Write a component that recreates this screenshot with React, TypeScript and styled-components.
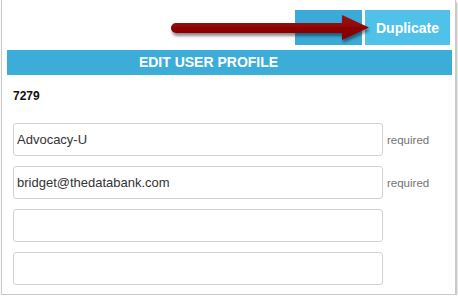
import styled, { createGlobalStyle } from 'styled-components';

const GlobalStyle = createGlobalStyle`
  html, body {
    margin: 0;
    padding: 0;
    background: #ffffff;
    font-family: 'Liberation Sans', Arial, sans-serif;
  }
`;

const Tarjeta = styled.div`
  position: relative;
  box-sizing: border-box;
  width: 455px;
  margin-left: 1px;
  padding: 10px 3px 9px 5px;
  background: #fff;
  border: 1px solid #c9c9c9;
  border-top: 0;
  box-shadow: 1px 2px 2px rgba(0, 0, 0, 0.3);
`;

const BarraHerramientas = styled.div`
  display: flex;
  justify-content: flex-end;
  gap: 3px;
  padding-right: 2px;
`;

const Boton = styled.button<{ $activo?: boolean }>`
  height: 35px;
  padding: 0 ${(p) => (p.$activo ? '11px' : '17px')};
  border: 0;
  border-radius: 0;
  background: ${(p) => (p.$activo ? '#50c1e9' : '#3aabd8')};
  color: ${(p) => (p.$activo ? '#fff' : 'rgba(255,255,255,0.6)')};
  font-family: 'Liberation Sans', Arial, sans-serif;
  font-size: 14px;
  font-weight: bold;
  cursor: pointer;
`;

const Cabecera = styled.div`
  margin-top: 5px;
  height: 25px;
  padding-right: 42px;
  background: #3cadd9;
  color: #fff;
  font-size: 14px;
  font-weight: bold;
  line-height: 25px;
  text-align: center;
`;

const Identificador = styled.div`
  margin: 14px 0 0 6px;
  font-size: 12px;
  font-weight: bold;
  line-height: 14px;
  color: #111;
`;

const Formulario = styled.div`
  display: flex;
  flex-direction: column;
  gap: 10px;
  margin: 20px 0 0 6px;
`;

const Fila = styled.div`
  display: flex;
  align-items: center;
  gap: 4px;
`;

const Campo = styled.input`
  box-sizing: border-box;
  width: 370px;
  height: 33px;
  padding: 0 3px;
  border: 1px solid #d2d2d2;
  border-radius: 3px;
  font-family: 'Liberation Sans', Arial, sans-serif;
  font-size: 13px;
  color: #333;
  outline: none;
`;

const Requerido = styled.span`
  font-size: 11.5px;
  color: #727272;
`;

const Flecha = styled.svg`
  position: absolute;
  left: 160px;
  top: 8px;
  pointer-events: none;
`;

const campos = [
  { valor: 'Advocacy-U', requerido: true },
  { valor: 'bridget@thedatabank.com', requerido: true },
  { valor: '', requerido: false },
  { valor: '', requerido: false },
];

export default function App() {
  return (
    <>
      <GlobalStyle />
      <Tarjeta>
        <BarraHerramientas>
          <Boton>Save</Boton>
          <Boton $activo>Duplicate</Boton>
        </BarraHerramientas>
        <Cabecera>EDIT USER PROFILE</Cabecera>
        <Identificador>7279</Identificador>
        <Formulario>
          {campos.map((c, i) => (
            <Fila key={i}>
              <Campo defaultValue={c.valor} />
              {c.requerido && <Requerido>required</Requerido>}
            </Fila>
          ))}
        </Formulario>
        <Flecha width="215" height="40" viewBox="0 0 215 40">
          <defs>
            <filter id="sombra" x="-10%" y="-30%" width="120%" height="180%">
              <feDropShadow dx="1" dy="3" stdDeviation="1.5" floodColor="#000" floodOpacity="0.45" />
            </filter>
            <linearGradient id="rojo" x1="0" y1="0" x2="0" y2="1">
              <stop offset="0" stopColor="#9a0c0c" />
              <stop offset="1" stopColor="#820000" />
            </linearGradient>
          </defs>
          <path
            d="M14 15 L180 15 L180 7 L207 19.5 L180 32 L180 25 L14 25 A5 5 0 0 1 14 15 Z"
            fill="url(#rojo)"
            filter="url(#sombra)"
          />
        </Flecha>
      </Tarjeta>
    </>
  );
}
